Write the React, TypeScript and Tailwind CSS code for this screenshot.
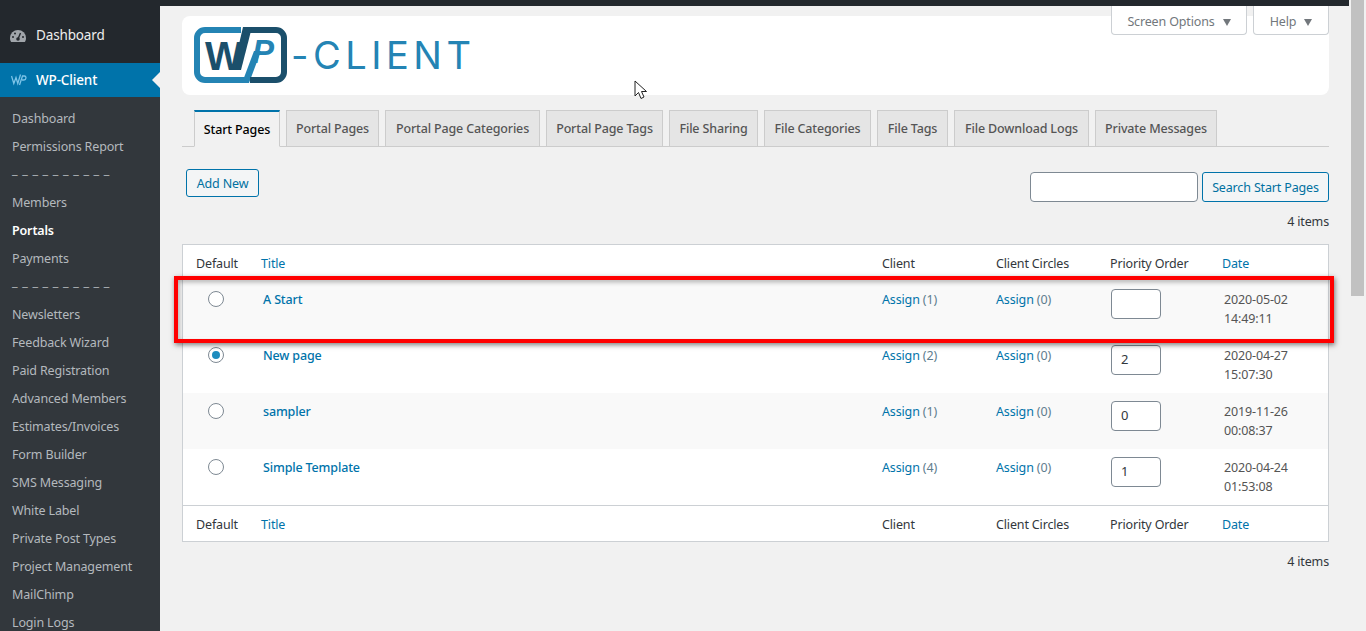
const sideLinks = [
  'Dashboard', 'Permissions Report', '_ _ _ _ _ _ _ _ _ _', 'Members', 'Portals', 'Payments',
  '_ _ _ _ _ _ _ _ _ _', 'Newsletters', 'Feedback Wizard', 'Paid Registration', 'Advanced Members',
  'Estimates/Invoices', 'Form Builder', 'SMS Messaging', 'White Label', 'Private Post Types',
  'Project Management', 'MailChimp', 'Login Logs',
];

const tabs = [
  { label: 'Portal Pages', width: 'w-[93px]' },
  { label: 'Portal Page Categories', width: 'w-[155px]' },
  { label: 'Portal Page Tags', width: 'w-[117px]' },
  { label: 'File Sharing', width: 'w-[89px]' },
  { label: 'File Categories', width: 'w-[107px]' },
  { label: 'File Tags', width: 'w-[71px]' },
  { label: 'File Download Logs', width: 'w-[135px]' },
  { label: 'Private Messages', width: 'w-[122px]' },
];

const rows = [
  { title: 'A Start', client: 1, order: '', date: '2020-05-02', time: '14:49:11', checked: false, alt: true },
  { title: 'New page', client: 2, order: '2', date: '2020-04-27', time: '15:07:30', checked: true, alt: false },
  { title: 'sampler', client: 1, order: '0', date: '2019-11-26', time: '00:08:37', checked: false, alt: true },
  { title: 'Simple Template', client: 4, order: '1', date: '2020-04-24', time: '01:53:08', checked: false, alt: false },
];

function Caret() {
  return <span className="ml-2 h-0 w-0 border-x-[4.5px] border-t-[7px] border-x-transparent border-t-[#72777c]" />;
}

function HeadRow({ top }: { top?: boolean }) {
  return (
    <div className={`flex h-9 items-center text-[#32373c] ${top ? 'pt-[2px]' : 'border-t border-[#ccd0d4] pt-[3px]'}`}>
      <span className="w-[78px] pl-[13px]">Default</span>
      <span className="w-[621px] text-[#0073aa]">Title</span>
      <span className="w-[114px]">Client</span>
      <span className="w-[114px]">Client Circles</span>
      <span className="w-[112px]">Priority Order</span>
      <span className="text-[#0073aa]">Date</span>
    </div>
  );
}

export default function App() {
  return (
    <div className="relative flex h-[631px] overflow-hidden bg-[#f1f1f1] font-['Noto_Sans',sans-serif] text-[12.500px] tracking-[-0.15px] text-[#444]">
      <aside className="w-40 shrink-0 bg-[#23282d]">
        <div className="flex h-[63px] items-center pl-[10px] pt-[8px] text-[13.500px] text-[#eee]">
          <svg width="16" height="14" viewBox="0 0 16 14" className="mr-[10px]">
            <path d="M8 1a8 8 0 0 0-8 8c0 1.600.4 3 1.200 4h13.600c.8-1 1.200-2.400 1.200-4a8 8 0 0 0-8-8z" fill="#a0a5aa" />
            <path d="M8 10 10.500 4" stroke="#23282d" strokeWidth="1.400" />
            <circle cx="8" cy="10" r="1.800" fill="#23282d" />
            <circle cx="3" cy="8" r="1" fill="#23282d" />
            <circle cx="5" cy="4.500" r="1" fill="#23282d" />
            <circle cx="13" cy="8" r="1" fill="#23282d" />
          </svg>
          Dashboard
        </div>
        <div className="relative flex h-[34px] items-center bg-[#0073aa] pl-[11px] text-[13.500px] font-medium text-white">
          <svg width="16" height="12" viewBox="0 0 16 12" fill="none" stroke="#7cc4e8" strokeWidth="1.300" className="mr-[9px]">
            <path d="M0.500 2 2.800 9.500 5 3.500 6.800 9.500 9.500 0.500M8.500 11 11.500 2H13.500C15.500 2 15.500 6 13 6H11" />
          </svg>
          WP-Client
          <span className="absolute right-0 top-[9px] h-0 w-0 border-y-[8px] border-r-[8px] border-y-transparent border-r-[#f1f1f1]" />
        </div>
        <nav className="bg-[#32373c] py-[7px]">
          {sideLinks.map((link, i) => {
            const isRule = link.startsWith('_');
            return (
              <div
                key={i}
                className={`flex h-7 items-center whitespace-nowrap pl-3 ${link === 'Portals' ? 'font-semibold text-white' : 'text-[#b4b9be]'} ${isRule ? 'pb-[8px] tracking-[0.700px]' : 'pt-[2px]'}`}
              >
                {link}
              </div>
            );
          })}
        </nav>
      </aside>

      <main className="relative flex-1">
        <div className="h-1.5 bg-[#23282d]" />
        <div className="pl-[22px] pr-5">
          <div className="mt-[10px] flex h-[79px] items-start rounded-lg bg-white pl-3 pt-[11px]">
            <svg width="93" height="56" viewBox="0 0 93 56" fill="none">
              <path d="M47 3H11a8 8 0 0 0-8 8v34a8 8 0 0 0 8 8H52" stroke="#2484b4" strokeWidth="6" />
              <path d="M48 56H55L67 24H60z" fill="#2484b4" />
              <path d="M52 3H82a8 8 0 0 1 8 8v34a8 8 0 0 1-8 8H56" stroke="#1b4f6b" strokeWidth="6" />
              <path d="M49 0H58L47 43H39z" fill="#1b4f6b" />
              <text x="11" y="43" fontFamily="Liberation Sans" fontWeight="700" fontSize="40" fill="#1b4f6b">W</text>
              <text x="58" y="36" fontFamily="Liberation Sans" fontWeight="700" fontStyle="italic" fontSize="33" fill="#2484b4">P</text>
            </svg>
            <span className="ml-[4px] mt-[1px] font-['Inter',sans-serif] text-[38px] font-normal leading-[54px] tracking-[4.500px] text-[#2484b4]">
              -CLIENT
            </span>
          </div>

          <div className="mt-[15px] flex h-[37px] gap-[6px] border-b border-[#ccc] pl-3 text-[#555]">
            <div className="h-[37px] w-[86px] border-x border-b border-[#ccc] border-b-[#f1f1f1] border-t-2 border-t-[#0073aa] pt-[9px] text-center font-medium text-black">
              Start Pages
            </div>
            {tabs.map((tab) => (
              <div key={tab.label} className={`h-[36px] border border-b-0 border-[#ccc] bg-[#e5e5e5] pt-[9px] text-center font-medium ${tab.width}`}>
                {tab.label}
              </div>
            ))}
          </div>

          <div className="mt-[22px] flex items-start justify-between pl-1">
            <button className="h-[28px] w-[73px] rounded-[3px] border border-[#0073aa] bg-[#f3f5f6] pt-[3px] text-[#0071a1]">Add New</button>
            <div className="mt-[3px] flex gap-1">
              <input className="h-[30px] w-[168px] rounded-[4px] border border-[#7e8993] bg-white" />
              <button className="h-[30px] w-[127px] rounded-[3px] border border-[#0073aa] bg-[#f3f5f6] pt-[3px] text-[#0071a1]">Search Start Pages</button>
            </div>
          </div>

          <div className="mt-[11px] text-right leading-[18px] text-[#32373c]">4 items</div>

          <div className="mt-[13px] border border-[#ccd0d4] bg-white">
            <HeadRow top />
            {rows.map((row) => (
              <div key={row.title} className={`flex h-14 items-start pt-[8px] ${row.alt ? 'bg-[#f9f9f9]' : 'bg-white'}`}>
                <span className="w-[78px] pl-[25px] pt-[2px]">
                  <span className="flex h-4 w-4 items-center justify-center rounded-full border border-[#7e8993] bg-white">
                    {row.checked && <span className="h-2 w-2 rounded-full bg-[#1e8cbe]" />}
                  </span>
                </span>
                <span className="w-[621px] pl-[2px] pt-[2px] font-medium text-[#0073aa]">{row.title}</span>
                <span className="w-[114px] pt-[2px] text-[#0073aa]">
                  Assign <span className="text-[#5f7d8f]">({row.client})</span>
                </span>
                <span className="w-[114px] pt-[2px] text-[#0073aa]">
                  Assign <span className="text-[#5f7d8f]">(0)</span>
                </span>
                <span className="w-[114px] pl-[1px]">
                  <span className="flex h-[30px] w-[50px] items-center rounded-[4px] border border-[#7e8993] bg-white pl-[9px] text-[13px] text-[#32373c]">
                    {row.order}
                  </span>
                </span>
                <span className="pt-[1px] leading-[19px] text-[#555]">
                  {row.date}
                  <br />
                  {row.time}
                </span>
              </div>
            ))}
            <HeadRow />
          </div>

          <div className="mt-[11px] text-right leading-[18px] text-[#32373c]">4 items</div>
        </div>

        <div className="absolute right-5 top-1.5 flex gap-[6px] text-[#72777c]">
          <div className="flex h-[29px] w-[136px] items-center justify-center rounded-b border border-t-0 border-[#ccd0d4] bg-white pt-[4px]">
            Screen Options
            <Caret />
          </div>
          <div className="flex h-[29px] w-[76px] items-center justify-center rounded-b border border-t-0 border-[#ccd0d4] bg-white pt-[4px]">
            Help
            <Caret />
          </div>
        </div>

        <svg width="14" height="20" viewBox="0 0 14 20" className="absolute left-[474px] top-[80px]">
          <path d="M1 1V16L4.500 12.500 7 18.500 10 17 7.500 11.500H12.500z" fill="#fff" stroke="#222" strokeWidth="1" />
        </svg>
      </main>

      <div className="w-[17px] shrink-0 bg-[#f1f1f1] px-[2px]">
        <div className="h-[296px] bg-[#c1c1c1]" />
      </div>

      {/* red highlight drawn over the first table row */}
      <div className="pointer-events-none absolute left-[174px] top-[276px] h-[67px] w-[1160px] border-4 border-[#ff0000] shadow-[1px_2px_5px_rgba(0,0,0,0.5),inset_1px_2px_5px_rgba(0,0,0,0.3)]" />
    </div>
  );
}
